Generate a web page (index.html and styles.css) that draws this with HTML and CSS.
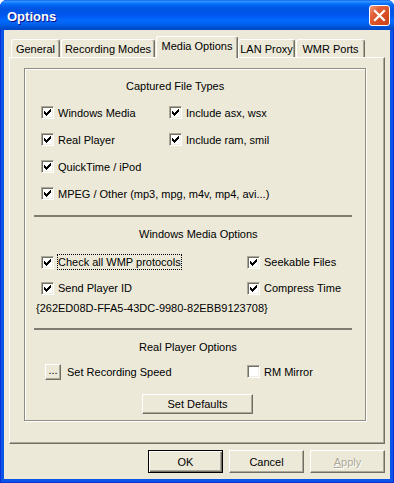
FILE: index.html
```html
<!DOCTYPE html>
<html>
<head>
<meta charset="utf-8">
<title>Options</title>
<link rel="stylesheet" href="styles.css">
</head>
<body>
<div class="window">
  <div class="titlebar">
    <span class="title">Options</span>
    <div class="close">
      <svg width="13" height="13" viewBox="0 0 13 13"><path d="M2 2L11 11M11 2L2 11" stroke="#fff" stroke-width="2.2" stroke-linecap="square"/></svg>
    </div>
  </div>
  <div class="client">
    <div class="tabs">
      <div class="tab t-general">General</div>
      <div class="tab t-rec">Recording Modes</div>
      <div class="tab sel t-media">Media Options</div>
      <div class="tab t-lan">LAN Proxy</div>
      <div class="tab t-wmr">WMR Ports</div>
    </div>
    <div class="panel">
      <div class="group">
        <div class="gtitle g1">Captured File Types</div>
        <div class="grid cap">
          <div class="item"><span class="cb"><svg width="7" height="7" viewBox="0 0 7 7"><path d="M0 2h1v3H0zM1 3h1v3H1zM2 4h1v3H2zM3 3h1v3H3zM4 2h1v3H4zM5 1h1v3H5zM6 0h1v3H6z" fill="#000"/></svg></span><span class="lbl">Windows Media</span></div>
          <div class="item"><span class="cb"><svg width="7" height="7" viewBox="0 0 7 7"><path d="M0 2h1v3H0zM1 3h1v3H1zM2 4h1v3H2zM3 3h1v3H3zM4 2h1v3H4zM5 1h1v3H5zM6 0h1v3H6z" fill="#000"/></svg></span><span class="lbl">Include asx, wsx</span></div>
          <div class="item"><span class="cb"><svg width="7" height="7" viewBox="0 0 7 7"><path d="M0 2h1v3H0zM1 3h1v3H1zM2 4h1v3H2zM3 3h1v3H3zM4 2h1v3H4zM5 1h1v3H5zM6 0h1v3H6z" fill="#000"/></svg></span><span class="lbl">Real Player</span></div>
          <div class="item"><span class="cb"><svg width="7" height="7" viewBox="0 0 7 7"><path d="M0 2h1v3H0zM1 3h1v3H1zM2 4h1v3H2zM3 3h1v3H3zM4 2h1v3H4zM5 1h1v3H5zM6 0h1v3H6z" fill="#000"/></svg></span><span class="lbl">Include ram, smil</span></div>
          <div class="item wide"><span class="cb"><svg width="7" height="7" viewBox="0 0 7 7"><path d="M0 2h1v3H0zM1 3h1v3H1zM2 4h1v3H2zM3 3h1v3H3zM4 2h1v3H4zM5 1h1v3H5zM6 0h1v3H6z" fill="#000"/></svg></span><span class="lbl">QuickTime / iPod</span></div>
          <div class="item wide"><span class="cb"><svg width="7" height="7" viewBox="0 0 7 7"><path d="M0 2h1v3H0zM1 3h1v3H1zM2 4h1v3H2zM3 3h1v3H3zM4 2h1v3H4zM5 1h1v3H5zM6 0h1v3H6z" fill="#000"/></svg></span><span class="lbl">MPEG / Other (mp3, mpg, m4v, mp4, avi...)</span></div>
        </div>
        <div class="sep s1"></div>
        <div class="gtitle g2">Windows Media Options</div>
        <div class="grid wmp">
          <div class="item"><span class="cb"><svg width="7" height="7" viewBox="0 0 7 7"><path d="M0 2h1v3H0zM1 3h1v3H1zM2 4h1v3H2zM3 3h1v3H3zM4 2h1v3H4zM5 1h1v3H5zM6 0h1v3H6z" fill="#000"/></svg></span><span class="lbl focus">Check all WMP protocols</span></div>
          <div class="item"><span class="cb"><svg width="7" height="7" viewBox="0 0 7 7"><path d="M0 2h1v3H0zM1 3h1v3H1zM2 4h1v3H2zM3 3h1v3H3zM4 2h1v3H4zM5 1h1v3H5zM6 0h1v3H6z" fill="#000"/></svg></span><span class="lbl">Seekable Files</span></div>
          <div class="item"><span class="cb"><svg width="7" height="7" viewBox="0 0 7 7"><path d="M0 2h1v3H0zM1 3h1v3H1zM2 4h1v3H2zM3 3h1v3H3zM4 2h1v3H4zM5 1h1v3H5zM6 0h1v3H6z" fill="#000"/></svg></span><span class="lbl">Send Player ID</span></div>
          <div class="item"><span class="cb"><svg width="7" height="7" viewBox="0 0 7 7"><path d="M0 2h1v3H0zM1 3h1v3H1zM2 4h1v3H2zM3 3h1v3H3zM4 2h1v3H4zM5 1h1v3H5zM6 0h1v3H6z" fill="#000"/></svg></span><span class="lbl">Compress Time</span></div>
        </div>
        <div class="guid">{262ED08D-FFA5-43DC-9980-82EBB9123708}</div>
        <div class="sep s2"></div>
        <div class="gtitle g3">Real Player Options</div>
        <div class="rprow">
          <div class="item">
            <span class="btn dots">...</span><span class="lbl speed">Set Recording Speed</span>
          </div>
          <div class="item rm"><span class="cb"></span><span class="lbl">RM Mirror</span></div>
        </div>
        <div class="btn defaults">Set Defaults</div>
      </div>
    </div>
    <div class="buttons">
      <div class="btn big def">OK</div>
      <div class="btn big">Cancel</div>
      <div class="btn big disabled"><u>A</u>pply</div>
    </div>
  </div>
</div>
</body>
</html>
```
FILE: styles.css
```css
html, body {
  margin: 0;
  padding: 0;
  background: #ffffff;
}
body {
  font-family: "Liberation Sans", Arial, sans-serif;
  font-size: 11px;
  color: #000;
}
.window {
  width: 394px;
  height: 483px;
  box-sizing: border-box;
  background: #0A55E8;
  border-radius: 7px 7px 0 0;
  display: flex;
  flex-direction: column;
  overflow: hidden;
  box-shadow: inset 1px 0 #0831D9, inset -1px 0 #0831D9, inset 0 -1px #0831D9;
}
.titlebar {
  height: 30px;
  flex: none;
  display: flex;
  align-items: center;
  justify-content: space-between;
  padding: 0 4px 0 7px;
  background: linear-gradient(to bottom, #0058EE 0px, #3A93FF 1px, #288EFF 2px, #127DFF 3px, #036FFC 4px, #0262EE 6px, #0057E5 8px, #0054E3 10px, #0055EB 14px, #005BF5 17px, #026AFE 20px, #0062EF 24px, #0052D6 27px, #0046C8 30px);
}
.title {
  color: #fff;
  font-weight: bold;
  font-size: 13px;
  text-shadow: 1px 1px #0F1089;
  padding-top: 2px;
}
.close {
  width: 21px;
  height: 21px;
  box-sizing: border-box;
  border: 1px solid #fff;
  border-radius: 3px;
  background: linear-gradient(135deg, #F2997A 0%, #E2623A 30%, #D54A20 70%, #C7401A 100%);
  display: flex;
  align-items: center;
  justify-content: center;
  align-self: flex-start;
  margin-top: 5px;
}
.client {
  flex: 1;
  margin: 0 4px 4px 4px;
  background: #ECE9D8;
  display: flex;
  flex-direction: column;
  padding: 6px 5px 6px 5px;
  box-sizing: border-box;
}
.tabs {
  height: 21px;
  display: flex;
  align-items: flex-end;
  padding-left: 2px;
  flex: none;
}
.tab {
  box-sizing: border-box;
  height: 18px;
  background: #ECE9D8;
  border-top: 1px solid #fff;
  border-left: 1px solid #fff;
  border-right: 1px solid #716F64;
  box-shadow: inset -1px 0 #ACA899;
  border-radius: 3px 3px 0 0;
  display: flex;
  align-items: center;
  justify-content: center;
  white-space: nowrap;
  padding-top: 1px;
}
.t-general { width: 49px; }
.t-rec { width: 94px; margin-left: 1px; }
.t-media { width: 82px; margin-left: 1px; }
.t-lan { width: 57px; }
.t-wmr { width: 69px; margin-left: 1px; }
.tab.sel {
  height: 22px;
  margin-bottom: -1px;
  position: relative;
  z-index: 1;
  padding-top: 0;
  padding-bottom: 3px;
}
.panel {
  height: 387px;
  flex: none;
  box-sizing: border-box;
  border-top: 1px solid #fff;
  border-left: 1px solid #fff;
  border-right: 1px solid #716F64;
  border-bottom: 1px solid #716F64;
  box-shadow: inset -1px -1px #ACA899;
  padding: 10px 0 0 14px;
}
.group {
  width: 342px;
  height: 353px;
  box-sizing: border-box;
  border: 1px solid #8F8D82;
  box-shadow: inset 1px 1px #fff, 1px 1px #fff;
  padding-left: 16px;
  display: flex;
  flex-direction: column;
}
.gtitle {
  height: 18px;
  line-height: 18px;
  flex: none;
}
.g1 { margin-top: 8px; margin-left: 85px; }
.g2 { margin-top: 8px; margin-left: 98px; }
.g3 { margin-top: 8px; margin-left: 98px; }
.grid {
  display: grid;
  flex: none;
}
.cap {
  margin-top: 4px;
  grid-template-columns: 128px auto;
  grid-auto-rows: 27px;
}
.wmp {
  margin-top: 6px;
  grid-template-columns: 206px auto;
  grid-auto-rows: 26px;
}
.item {
  display: flex;
  align-items: center;
  white-space: nowrap;
}
.wide { grid-column: 1 / -1; }
.cb {
  width: 13px;
  height: 13px;
  box-sizing: border-box;
  flex: none;
  background: #fff;
  border: 1px solid;
  border-color: #ACA899 #fff #fff #ACA899;
  box-shadow: inset 1px 1px #716F64, inset -1px -1px #F1EFE2;
  display: flex;
  align-items: center;
  justify-content: center;
}
.cb svg { display: block; }
.lbl {
  margin-left: 3px;
  padding: 0 1px;
  line-height: 14px;
}
.lbl.focus {
  padding: 0;
  border: 1px dotted #000;
}
.sep {
  height: 2px;
  background: #7F7C72;
  width: 318px;
  margin-left: -7px;
  flex: none;
}
.s1 { margin-top: 8px; }
.s2 { margin-top: 12px; }
.guid {
  height: 15px;
  line-height: 15px;
  margin-left: -5px;
  flex: none;
}
.rprow {
  margin-top: 5px;
  height: 21px;
  display: grid;
  grid-template-columns: 206px auto;
  flex: none;
}
.btn {
  box-sizing: border-box;
  background: #ECE9D8;
  border: 1px solid;
  border-color: #fff #716F64 #716F64 #fff;
  box-shadow: inset -1px -1px #ACA899;
  display: flex;
  align-items: center;
  justify-content: center;
  white-space: nowrap;
}
.dots {
  width: 16px;
  height: 16px;
  margin-left: 4px;
  line-height: 10px;
  padding-bottom: 3px;
}
.lbl.speed { margin-left: 5px; }
.defaults {
  margin-top: 12px;
  margin-left: 101px;
  width: 111px;
  height: 20px;
  flex: none;
}
.buttons {
  margin-top: 6px;
  display: flex;
  justify-content: flex-end;
  gap: 6px;
  flex: none;
}
.big {
  width: 75px;
  height: 23px;
}
.def {
  border: 1px solid #000;
  box-shadow: inset 1px 1px #fff, inset -1px -1px #716F64, inset -2px -2px #ACA899;
}
.disabled {
  color: #ACA899;
  text-shadow: 1px 1px #fff;
}
```
